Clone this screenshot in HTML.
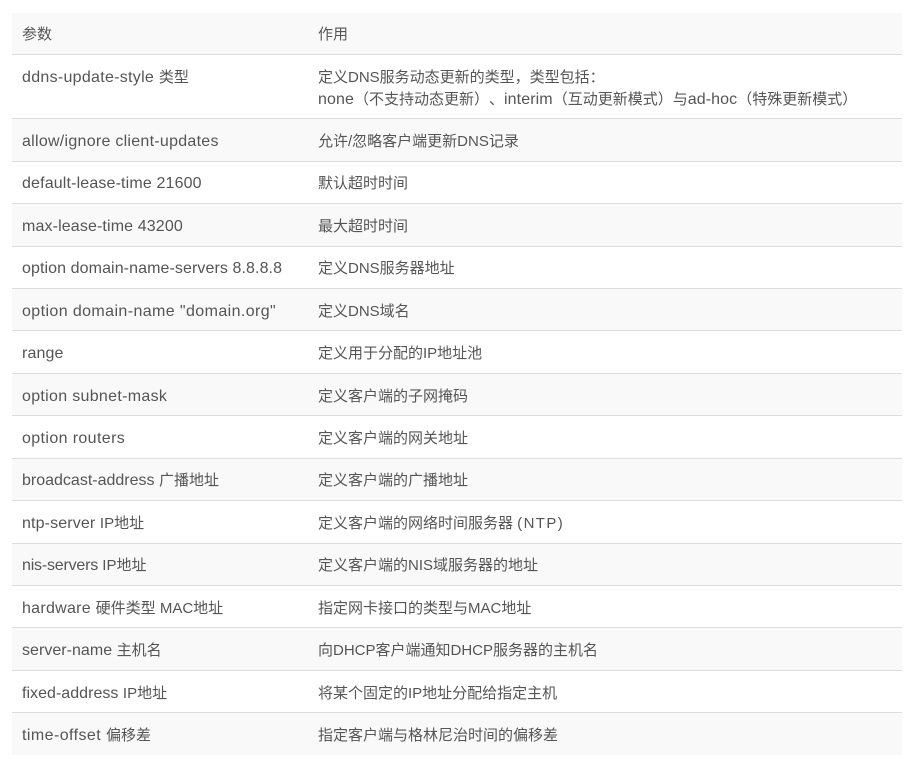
<!DOCTYPE html>
<html lang="zh">
<head>
<meta charset="utf-8">
<style>
html,body{margin:0;padding:0;background:#fff}
body{width:906px;height:771px;overflow:hidden;position:relative;font-family:"Liberation Sans","Noto Sans CJK SC",sans-serif;font-size:15px;line-height:21px;color:#555;text-spacing-trim:space-all}
.r{position:absolute;left:12px;width:890px;box-sizing:border-box}
.o{background:#f9f9f9}
.b{border-bottom:1.5px solid #ddd}
.a,.c{position:absolute;white-space:nowrap;margin-top:1px}
.a{left:10px}
.c{left:306px}
i{font-style:normal;font-size:16px}
</style>
</head>
<body>
<div class="r o b" style="top:13px;height:42px"><span class="a" style="top:10px">参数</span><span class="c" style="top:10px">作用</span></div>
<div class="r b" style="top:55px;height:64px"><span class="a" style="top:11px"><i style="letter-spacing:.29px">ddns-update-style </i>类型</span><span class="c" style="top:11px;line-height:22px">定义DNS服务动态更新的类型，类型包括：<br><i style="letter-spacing:.1px">none</i>（不支持动态更新）、<i style="letter-spacing:.1px">interim</i>（互动更新模式）与<i style="letter-spacing:.1px">ad-hoc</i>（特殊更新模式）</span></div>
<div class="r o b" style="top:119px;height:43px"><span class="a" style="top:11px"><i style="letter-spacing:.27px">allow/ignore client-updates</i></span><span class="c" style="top:11px">允许/忽略客户端更新DNS记录</span></div>
<div class="r b" style="top:162px;height:42px"><span class="a" style="top:10px"><i style="letter-spacing:.15px">default-lease-time 21600</i></span><span class="c" style="top:10px">默认超时时间</span></div>
<div class="r o b" style="top:204px;height:43px"><span class="a" style="top:11px"><i style="letter-spacing:.13px">max-lease-time 43200</i></span><span class="c" style="top:11px">最大超时时间</span></div>
<div class="r b" style="top:247px;height:42px"><span class="a" style="top:10px"><i style="letter-spacing:.09px">option domain-name-servers 8.8.8.8</i></span><span class="c" style="top:10px">定义DNS服务器地址</span></div>
<div class="r o b" style="top:289px;height:42px"><span class="a" style="top:11px"><i style="letter-spacing:.4px">option domain-name "domain.org"</i></span><span class="c" style="top:11px">定义DNS域名</span></div>
<div class="r b" style="top:331px;height:43px"><span class="a" style="top:11px"><i style="letter-spacing:.13px">range</i></span><span class="c" style="top:11px">定义用于分配的IP地址池</span></div>
<div class="r o b" style="top:374px;height:42px"><span class="a" style="top:11px"><i style="letter-spacing:.31px">option subnet-mask</i></span><span class="c" style="top:11px">定义客户端的子网掩码</span></div>
<div class="r b" style="top:416px;height:43px"><span class="a" style="top:11px"><i style="letter-spacing:.38px">option routers</i></span><span class="c" style="top:11px">定义客户端的网关地址</span></div>
<div class="r o b" style="top:459px;height:42px"><span class="a" style="top:10px"><i>broadcast-address </i>广播地址</span><span class="c" style="top:10px">定义客户端的广播地址</span></div>
<div class="r b" style="top:501px;height:43px"><span class="a" style="top:11px"><i style="letter-spacing:.13px">ntp-server </i>IP地址</span><span class="c" style="top:11px">定义客户端的网络时间服务器 <span style="letter-spacing:1.4px">(NTP)</span></span></div>
<div class="r o b" style="top:544px;height:42px"><span class="a" style="top:10px"><i style="letter-spacing:-.2px">nis-servers </i>IP地址</span><span class="c" style="top:10px">定义客户端的NIS域服务器的地址</span></div>
<div class="r b" style="top:586px;height:42px"><span class="a" style="top:11px"><i style="letter-spacing:.28px">hardware </i>硬件类型 MAC地址</span><span class="c" style="top:11px">指定网卡接口的类型与MAC地址</span></div>
<div class="r o b" style="top:628px;height:43px"><span class="a" style="top:11px"><i style="letter-spacing:.03px">server-name </i>主机名</span><span class="c" style="top:11px">向DHCP客户端通知DHCP服务器的主机名</span></div>
<div class="r b" style="top:671px;height:42px"><span class="a" style="top:11px"><i style="letter-spacing:.03px">fixed-address </i>IP地址</span><span class="c" style="top:11px">将某个固定的IP地址分配给指定主机</span></div>
<div class="r o" style="top:713px;height:42px"><span class="a" style="top:11px"><i style="letter-spacing:.43px">time-offset </i>偏移差</span><span class="c" style="top:11px">指定客户端与格林尼治时间的偏移差</span></div>
</body>
</html>
